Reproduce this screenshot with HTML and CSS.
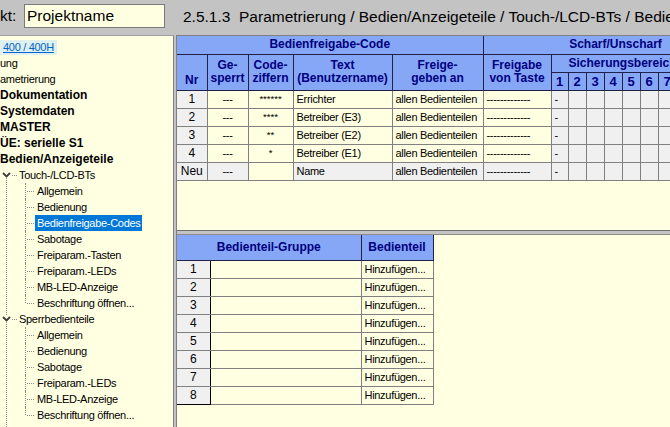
FILE: index.html
```html
<!DOCTYPE html>
<html lang="de">
<head>
    <meta charset="UTF-8">
    <title>Bedienfreigabe-Codes</title>
    <link rel="stylesheet" href="styles.css">
</head>
<body>
    <div class="window">
        <div class="project">
            <span class="project-label">kt:</span>
            <div class="project-name">Projektname</div>
        </div>

        <div class="title">2.5.1.3&nbsp; Parametrierung / Bedien/Anzeigeteile / Touch-/LCD-BTs / Bedienfreigabe-Codes</div>

        <div class="tree">
            <div class="node"><span class="link">400 / 400H</span></div>
            <div class="node">ung</div>
            <div class="node">ametrierung</div>
            <div class="node bold">Dokumentation</div>
            <div class="node bold">Systemdaten</div>
            <div class="node bold">MASTER</div>
            <div class="node bold">ÜE: serielle S1</div>
            <div class="node bold">Bedien/Anzeigeteile</div>

            <div class="branch">
                <div class="node folder">
                    <svg class="chevron" width="9" height="6" viewBox="0 0 9 6"><polyline points="1,1 4.5,4.5 8,1" /></svg>
                    <span class="stub"></span>
                    <span class="label">Touch-/LCD-BTs</span>
                </div>
                <div class="group">
                    <div class="node leaf"><span class="label">Allgemein</span></div>
                    <div class="node leaf"><span class="label">Bedienung</span></div>
                    <div class="node leaf selected"><span class="label">Bedienfreigabe-Codes</span></div>
                    <div class="node leaf"><span class="label">Sabotage</span></div>
                    <div class="node leaf"><span class="label">Freiparam.-Tasten</span></div>
                    <div class="node leaf"><span class="label">Freiparam.-LEDs</span></div>
                    <div class="node leaf"><span class="label">MB-LED-Anzeige</span></div>
                    <div class="node leaf"><span class="label">Beschriftung öffnen...</span></div>
                </div>

                <div class="node folder">
                    <svg class="chevron" width="9" height="6" viewBox="0 0 9 6"><polyline points="1,1 4.5,4.5 8,1" /></svg>
                    <span class="stub"></span>
                    <span class="label">Sperrbedienteile</span>
                </div>
                <div class="group">
                    <div class="node leaf"><span class="label">Allgemein</span></div>
                    <div class="node leaf"><span class="label">Bedienung</span></div>
                    <div class="node leaf"><span class="label">Sabotage</span></div>
                    <div class="node leaf"><span class="label">Freiparam.-LEDs</span></div>
                    <div class="node leaf"><span class="label">MB-LED-Anzeige</span></div>
                    <div class="node leaf"><span class="label">Beschriftung öffnen...</span></div>
                </div>

                <div class="node folder">
                    <span class="stub long"></span>
                    <span class="label">LTE 400 H 70</span>
                </div>
            </div>
        </div>

        <div class="content">
            <div class="pane-top">
                <table class="grid codes">
                    <colgroup>
                        <col style="width:30px"><col style="width:41px"><col style="width:45px">
                        <col style="width:99px"><col style="width:91px"><col style="width:68px">
                        <col style="width:17px"><col style="width:18px"><col style="width:18px">
                        <col style="width:18px"><col style="width:18px"><col style="width:18px">
                        <col style="width:18px"><col style="width:18px"><col style="width:54px">
                    </colgroup>
                    <tr>
                        <th colspan="5">Bedienfreigabe-Code</th>
                        <th colspan="10">Scharf/Unscharf</th>
                    </tr>
                    <tr>
                        <th rowspan="2" class="bottom">Nr</th>
                        <th rowspan="2">Ge-<br>sperrt</th>
                        <th rowspan="2">Code-<br>ziffern</th>
                        <th rowspan="2">Text<br>(Benutzername)</th>
                        <th rowspan="2">Freige-<br>geben an</th>
                        <th rowspan="2">Freigabe<br>von Taste</th>
                        <th colspan="8" class="sb-title">Sicherungsbereich</th>
                        <th rowspan="2"></th>
                    </tr>
                    <tr class="nums">
                        <th>1</th><th>2</th><th>3</th><th>4</th><th>5</th><th>6</th><th>7</th><th>8</th>
                    </tr>
                    <tr>
                        <td class="nr">1</td><td class="c">---</td><td class="c stars">******</td>
                        <td>Errichter</td><td>allen Bedienteilen</td><td>-------------</td>
                        <td class="sb">-</td><td class="sb"></td><td class="sb"></td><td class="sb"></td><td class="sb"></td><td class="sb"></td><td class="sb"></td><td class="sb"></td><td class="sb"></td>
                    </tr>
                    <tr>
                        <td class="nr">2</td><td class="c">---</td><td class="c stars">****</td>
                        <td>Betreiber (E3)</td><td>allen Bedienteilen</td><td>-------------</td>
                        <td class="sb">-</td><td class="sb"></td><td class="sb"></td><td class="sb"></td><td class="sb"></td><td class="sb"></td><td class="sb"></td><td class="sb"></td><td class="sb"></td>
                    </tr>
                    <tr>
                        <td class="nr">3</td><td class="c">---</td><td class="c stars">**</td>
                        <td>Betreiber (E2)</td><td>allen Bedienteilen</td><td>-------------</td>
                        <td class="sb">-</td><td class="sb"></td><td class="sb"></td><td class="sb"></td><td class="sb"></td><td class="sb"></td><td class="sb"></td><td class="sb"></td><td class="sb"></td>
                    </tr>
                    <tr>
                        <td class="nr">4</td><td class="c">---</td><td class="c stars">*</td>
                        <td>Betreiber (E1)</td><td>allen Bedienteilen</td><td>-------------</td>
                        <td class="sb">-</td><td class="sb"></td><td class="sb"></td><td class="sb"></td><td class="sb"></td><td class="sb"></td><td class="sb"></td><td class="sb"></td><td class="sb"></td>
                    </tr>
                    <tr>
                        <td class="nr">Neu</td><td class="c gray">---</td><td></td>
                        <td class="gray">Name</td><td class="gray">allen Bedienteilen</td><td class="gray">-------------</td>
                        <td class="sb">-</td><td class="sb"></td><td class="sb"></td><td class="sb"></td><td class="sb"></td><td class="sb"></td><td class="sb"></td><td class="sb"></td><td class="sb"></td>
                    </tr>
                </table>
            </div>

            <div class="hsplit"></div>

            <div class="pane-bottom">
                <table class="grid groups">
                    <colgroup>
                        <col style="width:33px"><col style="width:151px"><col style="width:72px">
                    </colgroup>
                    <tr class="head">
                        <th colspan="2">Bedienteil-Gruppe</th>
                        <th>Bedienteil</th>
                    </tr>
                    <tr><td class="nr">1</td><td></td><td>Hinzufügen...</td></tr>
                    <tr><td class="nr">2</td><td></td><td>Hinzufügen...</td></tr>
                    <tr><td class="nr">3</td><td></td><td>Hinzufügen...</td></tr>
                    <tr><td class="nr">4</td><td></td><td>Hinzufügen...</td></tr>
                    <tr><td class="nr">5</td><td></td><td>Hinzufügen...</td></tr>
                    <tr><td class="nr">6</td><td></td><td>Hinzufügen...</td></tr>
                    <tr><td class="nr">7</td><td></td><td>Hinzufügen...</td></tr>
                    <tr><td class="nr last">8</td><td></td><td>Hinzufügen...</td></tr>
                </table>
            </div>
        </div>
    </div>
</body>
</html>
```

FILE: styles.css
```css
* {
    margin: 0;
    padding: 0;
    box-sizing: border-box;
}

body {
    width: 670px;
    height: 427px;
    overflow: hidden;
    background: #c3c3c3;
    font-family: 'Liberation Sans', Arial, sans-serif;
    font-size: 11px;
    color: #000;
}

.window {
    display: grid;
    grid-template-columns: 174px 2px 1fr;
    grid-template-rows: 35px 392px;
    height: 427px;
}

/* Kopfzeile */

.project {
    grid-column: 1;
    grid-row: 1;
    display: flex;
    align-items: center;
    padding-bottom: 3px;
    font-size: 15.5px;
}

.project-label {
    width: 24px;
}

.project-name {
    width: 141px;
    height: 24px;
    border: 1px solid #7a7a7a;
    background: #ffffe1;
    line-height: 22px;
    padding-left: 2px;
}

.title {
    grid-column: 3;
    grid-row: 1;
    font-size: 15.5px;
    line-height: 34px;
    padding-left: 7px;
    white-space: nowrap;
    overflow: hidden;
}

/* Baum */

.tree {
    grid-column: 1;
    grid-row: 2;
    background: #ffffe1;
    border-top: 1px solid #a0a0a0;
    border-right: 1px solid #808080;
    padding-top: 3px;
    overflow: hidden;
    white-space: nowrap;
}

.node {
    height: 16px;
    line-height: 16px;
    letter-spacing: -0.3px;
}

.node.bold {
    font-weight: bold;
    font-size: 12px;
    letter-spacing: 0;
}

.link {
    display: inline-block;
    height: 15px;
    line-height: 15px;
    padding: 0 3px 0 3px;
    background: #dff0ee;
    color: #0066cc;
    text-decoration: underline;
}

.branch {
    position: relative;
}

.branch::before {
    content: '';
    position: absolute;
    left: 6px;
    top: 8px;
    bottom: 0;
    border-left: 1px dotted #8a8a8a;
}

.folder {
    position: relative;
    display: flex;
    align-items: center;
}

.chevron {
    margin-left: 2px;
    background: #ffffe1;
    fill: none;
    stroke: #3c3c3c;
    stroke-width: 1.8;
}

.stub {
    width: 5px;
    margin-left: 1px;
    border-top: 1px dotted #8a8a8a;
}

.stub.long {
    width: 10px;
    margin-left: 7px;
}

.folder .label {
    margin-left: 2px;
}

.leaf {
    position: relative;
    padding-left: 35px;
}

.leaf::before {
    content: '';
    position: absolute;
    left: 25px;
    top: 0;
    bottom: 0;
    border-left: 1px dotted #8a8a8a;
}

.leaf:last-child::before {
    bottom: 8px;
}

.leaf::after {
    content: '';
    position: absolute;
    left: 27px;
    top: 8px;
    width: 7px;
    border-top: 1px dotted #8a8a8a;
}

.leaf .label {
    display: inline-block;
    height: 16px;
    padding: 0 2px;
}

.leaf.selected .label {
    background: #0078d7;
    color: #fff;
}

/* Inhalt */

.content {
    grid-column: 3;
    grid-row: 2;
    display: flex;
    flex-direction: column;
    background: #ffffe1;
    border-left: 1px solid #808080;
    border-top: 1px solid #808080;
    overflow: hidden;
}

.pane-top {
    height: 194px;
    flex: none;
    overflow: hidden;
}

.hsplit {
    height: 5px;
    flex: none;
    background: #c3c3c3;
    border-top: 1px solid #707070;
    border-bottom: 1px solid #8c8c8c;
}

.pane-bottom {
    flex: 1;
    overflow: hidden;
}

.grid {
    border-collapse: collapse;
    table-layout: fixed;
    border-top-style: hidden;
    border-left-style: hidden;
}

.codes {
    width: 571px;
}

.groups {
    width: 256px;
}

.grid tr {
    height: 18px;
}

.grid th,
.grid td {
    border: 1px solid #808080;
    padding: 0 3px;
    white-space: nowrap;
    overflow: hidden;
}

.grid th {
    background: #86a6f6;
    color: #000080;
    font-size: 12px;
    font-weight: bold;
    line-height: 13px;
    border-color: #20204a;
    text-align: center;
}

.grid th.bottom {
    vertical-align: bottom;
    padding-bottom: 3px;
}

.grid .nums th {
    font-size: 13px;
    padding: 0;
}

.grid td {
    background: #ffffe1;
    letter-spacing: -0.3px;
    line-height: 16px;
}

.grid td.nr {
    background: #f0f0f0;
    text-align: center;
    font-size: 12px;
    letter-spacing: 0;
}

.grid td.c {
    text-align: center;
}

.grid td.stars {
    font-size: 9.5px;
    letter-spacing: 0;
}

.grid td.gray,
.grid td.sb {
    background: #f0f0f0;
}

.groups tr.head {
    height: 25px;
}

.groups td.nr {
    border-right-color: #000;
}

.groups td.nr.last {
    border-bottom-color: #000;
}
```
